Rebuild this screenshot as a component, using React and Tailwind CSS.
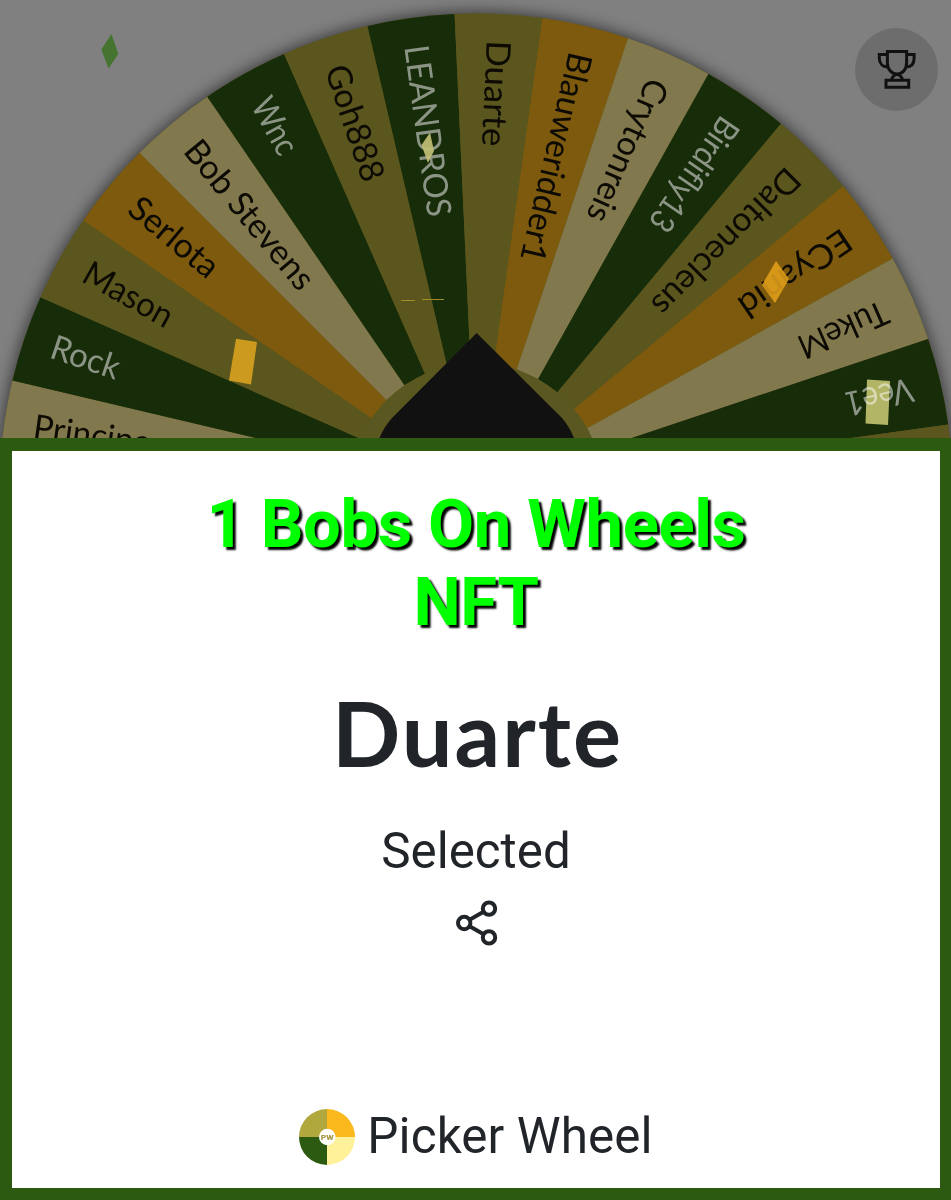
import React from "react";

const CX = 476.2;
const CY = 490;
const R = 476.5;
const HUB = 127;
const STEP = 360 / 34;
const START = -2.6;

const OLIVE = "#5a561e";
const ORANGE = "#7d5a0e";
const CREAM = "#81794d";
const GREEN = "#172c08";

// index of the slice clockwise from the winning one, fill, label, start radius, label length
const slices = [
  [-9, OLIVE, "", 0, 0],
  [-8, CREAM, "Principe", 447, 118],
  [-7, GREEN, "Rock", 448, 71],
  [-6, OLIVE, "Mason", 448, 98],
  [-5, ORANGE, "Serlota", 447, 106],
  [-4, CREAM, "Bob Stevens", 448, 183],
  [-3, GREEN, "Wnc", 446, 60],
  [-2, OLIVE, "Goh888", 447, 121],
  [-1, GREEN, "LEANDROS", 449, 173],
  [0, OLIVE, "Duarte", 450, 106],
  [1, ORANGE, "Blauweridder1", 449, 214],
  [2, CREAM, "Crytonreis", 448, 153],
  [3, GREEN, "Birdifly13", 449, 131],
  [4, OLIVE, "Daltonecleus", 449, 194],
  [5, ORANGE, "ECyanid", 450, 129],
  [6, CREAM, "TukeM", 448, 95],
  [7, GREEN, "Vee1", 448, 69],
  [8, OLIVE, "", 0, 0],
];

function at(deg, r) {
  const a = (deg * Math.PI) / 180;
  return `${(CX + r * Math.sin(a)).toFixed(2)} ${(CY - r * Math.cos(a)).toFixed(2)}`;
}

function Slice({ index, fill }) {
  const a = START + index * STEP;
  const b = a + STEP;
  return (
    <path
      d={`M${at(a, HUB)} L${at(a, R)} A${R} ${R} 0 0 1 ${at(b, R)} L${at(b, HUB)} Z`}
      fill={fill}
    />
  );
}

function Label({ index, fill, text, radius, length }) {
  const mid = START + (index + 0.5) * STEP;
  return (
    <text
      x={0}
      y={10.5}
      transform={`translate(${at(mid, radius)}) rotate(${90 + mid})`}
      textLength={length}
      lengthAdjust="spacingAndGlyphs"
      className="font-['Lato',sans-serif] text-[34px]"
      fill={fill === GREEN ? "#8b9485" : "#0d0a04"}
    >
      {text}
    </text>
  );
}

function Wheel() {
  return (
    <svg width="951" height="438" viewBox="0 0 951 438" className="block">
      <defs>
        <filter id="soft" x="-10%" y="-10%" width="120%" height="120%">
          <feGaussianBlur stdDeviation="8" />
        </filter>
      </defs>
      <circle cx={CX} cy={CY} r={R + 1} fill="#000" opacity="0.6" filter="url(#soft)" />
      <circle cx={CX} cy={CY} r={R} fill={OLIVE} />
      {slices.map(([i, fill]) => (
        <Slice key={i} index={i} fill={fill} />
      ))}
      <circle cx={CX} cy={CY} r={HUB} fill="#5b5720" />
      {slices
        .filter((s) => s[2])
        .map(([i, fill, text, radius, length]) => (
          <Label key={i} index={i} fill={fill} text={text} radius={radius} length={length} />
        ))}
      <path d="M476.7 333 L562 418 Q569 426 574 438 H379.5 Q384 427 392 418 Z" fill="#111" />
      <path d="M111.5 34 L118.3 54 L108.5 68.5 L101.3 49.5 Z" fill="#457430" />
      <path d="M236 338.7 L257 342 L251 384.5 L229 380.5 Z" fill="#cb9a1e" />
      <path d="M430 132.5 L434 151 L428 163 L421.5 145 Z" fill="#c1bd76" opacity="0.93" />
      <path d="M401 300.5 H415 M422 299.5 H444" stroke="#a58a28" strokeWidth="1" />
      <path d="M776 261 L789 279 L775 303 L762 285 Z" fill="#e3a11a" opacity="0.87" />
      <path
        d="M867 379.5 L890 381 L888 425 L865.5 423.5 Z"
        className="fill-[#c8c372] opacity-85 mix-blend-screen"
      />
    </svg>
  );
}

function Trophy() {
  return (
    <svg width="40" height="40" viewBox="0 0 40 40" fill="none" stroke="#111" strokeWidth="3">
      <path d="M10.4 1.5 H29.6 V13 C29.6 19 25.6 24 20 24 C14.4 24 10.4 19 10.4 13 Z" />
      <path d="M10.4 4.4 H2.3 V8 C2.3 13.5 5.5 17 11 17" />
      <path d="M29.6 4.4 H37.1 V8 C37.1 13.5 34.3 17 29 17" />
      <path d="M14.4 30 C15.4 26.5 17.2 24.4 20 24.4 C22.8 24.4 24.6 26.5 25.6 30" />
      <path d="M9 30.3 H31.7 V37.3 H9 Z" />
    </svg>
  );
}

function ShareIcon() {
  return (
    <svg width="42" height="46" viewBox="0 0 42 46" fill="none" stroke="#212529" strokeWidth="4">
      <circle cx="8.2" cy="23" r="6.2" />
      <circle cx="33" cy="8.6" r="6.2" />
      <circle cx="33" cy="37.4" r="6.2" />
      <path d="M13.6 19.8 L27.6 11.8 M13.6 26.2 L27.6 34.2" />
    </svg>
  );
}

function Logo() {
  return (
    <svg width="56" height="56" viewBox="0 0 56 56">
      <path d="M28 28 V0 A28 28 0 0 0 0 28 Z" fill="#b0a83c" />
      <path d="M28 28 V0 A28 28 0 0 1 56 28 Z" fill="#fbb81c" />
      <path d="M28 28 V56 A28 28 0 0 1 0 28 Z" fill="#2c5a10" />
      <path d="M28 28 V56 A28 28 0 0 0 56 28 Z" fill="#fff19a" />
      <circle cx="28.3" cy="28" r="8.3" fill="#fff" />
      <text
        x="28.3"
        y="31"
        textAnchor="middle"
        textLength="13"
        lengthAdjust="spacingAndGlyphs"
        className="font-['Roboto',sans-serif] text-[8px] font-black"
        fill="#a89a48"
      >
        PW
      </text>
    </svg>
  );
}

export default function App() {
  return (
    <main className="flex h-[1200px] w-[951px] flex-col overflow-hidden bg-[#808080] text-[#212529]">
      <section className="relative h-[438px] shrink-0">
        <Wheel />
        <button className="absolute top-[28px] right-[13px] flex size-[83px] items-center justify-center rounded-full bg-[#6d6d6d]">
          <Trophy />
        </button>
      </section>
      <section className="flex grow flex-col items-center border-[12px] border-t-[13px] border-r-[11px] border-[#2c5a10] bg-white pt-[34px]">
        <h1 className="text-center font-['Roboto',sans-serif] text-[67px] leading-[78px] font-bold tracking-[-0.4px] text-[#00ff00] [text-shadow:3px_3px_2px_#000]">
          1 Bobs On Wheels
          <br />
          NFT
        </h1>
        <h2 className="mt-[41px] pl-[3px] font-['Lato',sans-serif] text-[90px] leading-[100px] font-bold tracking-[2px]">
          Duarte
        </h2>
        <p className="mt-[40px] font-['Roboto',sans-serif] text-[49.3px] leading-[58px]">
          Selected
        </p>
        <button className="mt-[20px] pl-[2px]">
          <ShareIcon />
        </button>
        <footer className="mt-auto mb-[23px] flex items-center gap-[12px]">
          <Logo />
          <span className="-mt-[2px] font-['Roboto',sans-serif] text-[49.4px] leading-[56px] tracking-[0.1px]">
            Picker Wheel
          </span>
        </footer>
      </section>
    </main>
  );
}
